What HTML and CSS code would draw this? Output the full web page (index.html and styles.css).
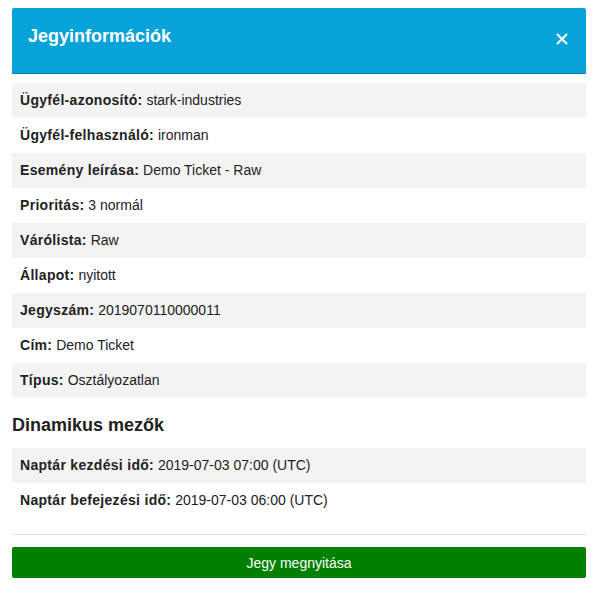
FILE: index.html
```html
<!DOCTYPE html>
<html lang="hu">
<head>
<meta charset="utf-8">
<title>Jegyinformációk</title>
<link rel="stylesheet" href="styles.css">
</head>
<body>
<div class="page">
  <div class="modal-header">
    <h1 class="modal-title">Jegyinformációk</h1>
    <button class="close" aria-label="Bezárás">
      <svg width="12" height="12" viewBox="0 0 12 12"><path d="M1 1 L11 11 M11 1 L1 11" stroke="#fff" stroke-width="2" fill="none"/></svg>
    </button>
  </div>
  <div class="rows first">
    <div class="row"><b>Ügyfél-azonosító:</b> stark-industries</div>
    <div class="row"><b>Ügyfél-felhasználó:</b> ironman</div>
    <div class="row"><b>Esemény leírása:</b> Demo Ticket - Raw</div>
    <div class="row"><b>Prioritás:</b> 3 normál</div>
    <div class="row"><b>Várólista:</b> Raw</div>
    <div class="row"><b>Állapot:</b> nyitott</div>
    <div class="row"><b>Jegyszám:</b> 2019070110000011</div>
    <div class="row"><b>Cím:</b> Demo Ticket</div>
    <div class="row"><b>Típus:</b> Osztályozatlan</div>
  </div>
  <h2 class="section-title">Dinamikus mezők</h2>
  <div class="rows">
    <div class="row"><b>Naptár kezdési idő:</b> 2019-07-03 07:00 (UTC)</div>
    <div class="row"><b>Naptár befejezési idő:</b> 2019-07-03 06:00 (UTC)</div>
  </div>
  <hr class="divider">
  <button class="open-btn">Jegy megnyitása</button>
</div>
</body>
</html>
```
FILE: styles.css
```css
html, body {
  margin: 0;
  padding: 0;
  background: #fff;
}
body {
  font-family: "Liberation Sans", Arial, sans-serif;
  font-size: 14px;
  color: #222;
}
.page {
  padding: 8px 12px 0 12px;
}
.modal-header {
  box-sizing: border-box;
  height: 66px;
  display: flex;
  justify-content: space-between;
  align-items: flex-start;
  padding: 18px 18px 0 16px;
  background: #05a3da;
  border-bottom: 1px solid #0287b6;
  border-radius: 2px 2px 0 0;
}
.modal-title {
  margin: 0;
  font-size: 18px;
  line-height: 20px;
  font-weight: bold;
  color: #fff;
}
.close {
  margin: 7px 0 0 0;
  padding: 0;
  border: 0;
  background: none;
  width: 12px;
  height: 12px;
  display: block;
  cursor: pointer;
}
.close svg {
  display: block;
}
.rows.first {
  margin-top: 9px;
}
.row {
  padding: 8px 8px;
  line-height: 19px;
  font-size: 14px;
}
.row:nth-child(odd) {
  background: #f3f3f3;
}
.row b {
  font-weight: bold;
  letter-spacing: 0.3px;
}
.section-title {
  margin: 16px 0 12px 0;
  font-size: 18px;
  line-height: 22px;
  font-weight: bold;
  color: #222;
}
.divider {
  margin: 16px 0 12px 0;
  border: 0;
  border-top: 1px solid #ddd;
  height: 0;
}
.open-btn {
  display: block;
  width: 100%;
  height: 31px;
  border: 0;
  border-radius: 2px;
  background: #008000;
  color: #fff;
  font-family: "Liberation Sans", Arial, sans-serif;
  font-size: 14px;
  cursor: pointer;
}
```
